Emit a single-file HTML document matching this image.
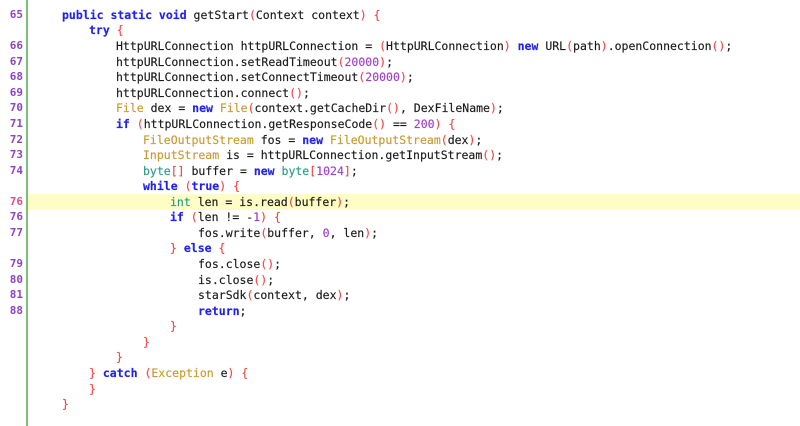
<!DOCTYPE html>
<html><head><meta charset="utf-8"><style>
body{margin:0;width:800px;height:426px;background:#fff;overflow:hidden;position:relative;font-family:"DejaVu Sans Mono","Liberation Mono",monospace;font-size:11.5px}
.ln{position:absolute;left:0;width:23px;text-align:right;color:#8e44c8;font-weight:bold;font-size:11px}
.c{position:absolute;white-space:pre;color:#1a1a1a;-webkit-text-stroke:0.15px}
.k{color:#2222ee;font-weight:bold}
.t{color:#c89a30}
.p{color:#f04848}
.n{color:#a040c8}
.i{color:#2a9a8a}
#g{position:absolute;left:26px;top:0;width:2px;height:426px;background:#79c079}
#h{position:absolute;left:28px;right:0;top:194px;height:16px;background:#fdfdc4}
</style></head><body>
<div id="h"></div><div id="g"></div>
<div class="ln" style="top:8px">65</div>
<div class="ln" style="top:39px">66</div>
<div class="ln" style="top:55px">67</div>
<div class="ln" style="top:70px">68</div>
<div class="ln" style="top:86px">69</div>
<div class="ln" style="top:101px">70</div>
<div class="ln" style="top:117px">71</div>
<div class="ln" style="top:133px">72</div>
<div class="ln" style="top:148px">73</div>
<div class="ln" style="top:164px">74</div>
<div class="ln" style="top:195px;color:#e0508a">76</div>
<div class="ln" style="top:210px">76</div>
<div class="ln" style="top:226px">77</div>
<div class="ln" style="top:257px">79</div>
<div class="ln" style="top:273px">80</div>
<div class="ln" style="top:288px">81</div>
<div class="ln" style="top:304px">88</div>
<div class="c" style="top:8px;left:62px"><span class="k">public static void</span> getStart<span class="p">(</span>Context context<span class="p">)</span> <span class="p">{</span></div>
<div class="c" style="top:23px;left:89px"><span class="k">try</span> <span class="p">{</span></div>
<div class="c" style="top:39px;left:116px">HttpURLConnection httpURLConnection = <span class="p">(</span>HttpURLConnection<span class="p">)</span> <span class="k">new</span> URL<span class="p">(</span>path<span class="p">)</span>.openConnection<span class="p">()</span>;</div>
<div class="c" style="top:55px;left:116px">httpURLConnection.setReadTimeout<span class="p">(</span><span class="n">20000</span><span class="p">)</span>;</div>
<div class="c" style="top:70px;left:116px">httpURLConnection.setConnectTimeout<span class="p">(</span><span class="n">20000</span><span class="p">)</span>;</div>
<div class="c" style="top:86px;left:116px">httpURLConnection.connect<span class="p">()</span>;</div>
<div class="c" style="top:101px;left:116px"><span class="t">File</span> dex = <span class="k">new</span> <span class="t">File</span><span class="p">(</span>context.getCacheDir<span class="p">()</span>, DexFileName<span class="p">)</span>;</div>
<div class="c" style="top:117px;left:116px"><span class="k">if</span> <span class="p">(</span>httpURLConnection.getResponseCode<span class="p">()</span> == <span class="n">200</span><span class="p">)</span> <span class="p">{</span></div>
<div class="c" style="top:133px;left:143px"><span class="t">FileOutputStream</span> fos = <span class="k">new</span> <span class="t">FileOutputStream</span><span class="p">(</span>dex<span class="p">)</span>;</div>
<div class="c" style="top:148px;left:143px"><span class="t">InputStream</span> is = httpURLConnection.getInputStream<span class="p">()</span>;</div>
<div class="c" style="top:164px;left:143px"><span class="i">byte</span><span class="p">[]</span> buffer = <span class="k">new</span> <span class="i">byte</span><span class="p">[</span><span class="n">1024</span><span class="p">]</span>;</div>
<div class="c" style="top:179px;left:143px"><span class="k">while</span> <span class="p">(</span><span class="k">true</span><span class="p">)</span> <span class="p">{</span></div>
<div class="c" style="top:195px;left:170px"><span class="i">int</span> len = is.read<span class="p">(</span>buffer<span class="p">)</span>;</div>
<div class="c" style="top:210px;left:170px"><span class="k">if</span> <span class="p">(</span>len != -<span class="n">1</span><span class="p">)</span> <span class="p">{</span></div>
<div class="c" style="top:226px;left:198px">fos.write<span class="p">(</span>buffer, <span class="n">0</span>, len<span class="p">)</span>;</div>
<div class="c" style="top:241px;left:170px"><span class="p">}</span> <span class="k">else</span> <span class="p">{</span></div>
<div class="c" style="top:257px;left:198px">fos.close<span class="p">()</span>;</div>
<div class="c" style="top:273px;left:198px">is.close<span class="p">()</span>;</div>
<div class="c" style="top:288px;left:198px">starSdk<span class="p">(</span>context, dex<span class="p">)</span>;</div>
<div class="c" style="top:304px;left:198px"><span class="k">return</span>;</div>
<div class="c" style="top:319px;left:170px"><span class="p">}</span></div>
<div class="c" style="top:335px;left:143px"><span class="p">}</span></div>
<div class="c" style="top:350px;left:116px"><span class="p">}</span></div>
<div class="c" style="top:366px;left:89px"><span class="p">}</span> <span class="k">catch</span> <span class="p">(</span><span class="t">Exception</span> e<span class="p">)</span> <span class="p">{</span></div>
<div class="c" style="top:382px;left:89px"><span class="p">}</span></div>
<div class="c" style="top:397px;left:62px"><span class="p">}</span></div>
</body></html>
